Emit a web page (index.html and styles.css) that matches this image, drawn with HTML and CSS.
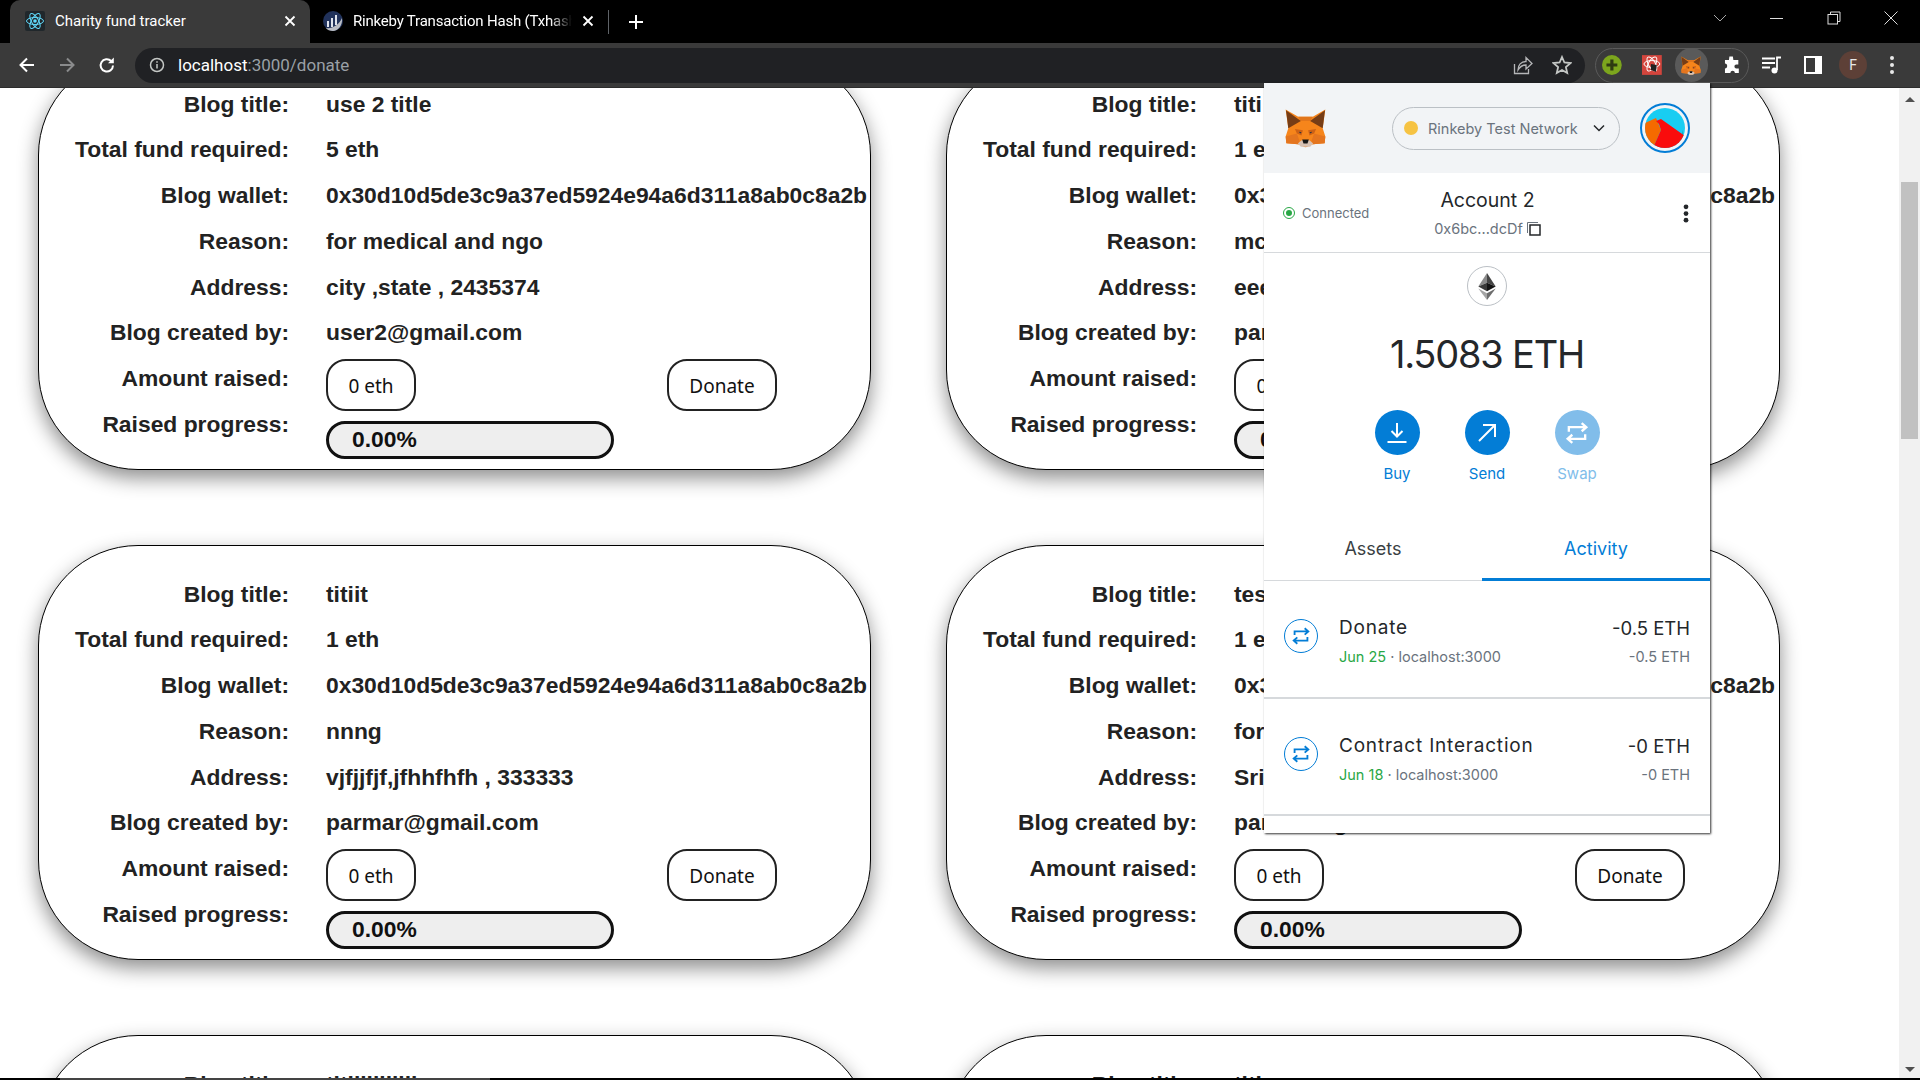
FILE: index.html
```html
<!DOCTYPE html>
<html lang="en">
<head>
    <meta charset="UTF-8">
    <title>Charity fund tracker</title>
    <link rel="stylesheet" href="styles.css">
</head>
<body>
    <svg class="defs" width="0" height="0">
        <symbol id="fox" viewBox="0 0 124 118">
            <polygon fill="#f6851b" points="2,3 40,25 84,25 122,3 114,60 122,85 120,105 85,108 62,118 39,108 4,105 2,85 10,60"/>
            <polygon fill="#e2761b" points="40,25 84,25 76,38 48,38"/>
            <polygon fill="#763d16" points="3,5 48,38 10,60"/>
            <polygon fill="#763d16" points="121,5 76,38 114,60"/>
            <polygon fill="#cd6116" points="30,62 54,66 50,82 36,76"/>
            <polygon fill="#cd6116" points="94,62 70,66 74,82 88,76"/>
            <polygon fill="#233447" points="42,70 50,72 46,76"/>
            <polygon fill="#233447" points="82,70 74,72 78,76"/>
            <polygon fill="#e4751f" points="2,85 36,76 44,98 39,108 4,105"/>
            <polygon fill="#e4751f" points="122,85 88,76 80,98 85,108 120,105"/>
            <polygon fill="#d7c1b3" points="39,106 50,96 74,96 85,106 76,116 48,116"/>
            <polygon fill="#161616" points="52,94 72,94 68,106 56,106"/>
        </symbol>
        <symbol id="swap" viewBox="0 0 24 24">
            <path d="M5 11V7h14M16 3.500 20 7l-4 3.500M19 13v4H5M8 20.500 4 17l4-3.500" fill="none" stroke="currentColor" stroke-width="2"/>
        </symbol>
    </svg>

    <header class="chrome">
        <div class="tabstrip">
            <div class="tab tab-active">
                <svg class="favicon" viewBox="0 0 20 20"><rect width="20" height="20" rx="2" fill="#20272b"/><g fill="none" stroke="#61dafb" stroke-width="1"><ellipse cx="10" cy="10" rx="8.500" ry="3.500"/><ellipse cx="10" cy="10" rx="8.500" ry="3.500" transform="rotate(60 10 10)"/><ellipse cx="10" cy="10" rx="8.500" ry="3.500" transform="rotate(120 10 10)"/></g><circle cx="10" cy="10" r="1.800" fill="#61dafb"/></svg>
                <span class="tab-title">Charity fund tracker</span>
                <svg class="tab-close" viewBox="0 0 12 12"><path d="M1.500 1.500l9 9M10.500 1.500l-9 9" stroke="#fff" stroke-width="1.800"/></svg>
            </div>
            <div class="tab tab-other">
                <svg class="favicon" viewBox="0 0 20 20"><circle cx="10" cy="10" r="10" fill="#21325b"/><path d="M4 10h2v6H4zM8 7h2v9H8zM12 4h2v10h-2z" fill="#dfe4ee"/><path d="M3 17c6 1 13-3 16-10 1 7-4 13-9 13-3 0-6-1-7-3z" fill="#b9bcc4"/></svg>
                <span class="tab-title tab-fade">Rinkeby Transaction Hash (Txhash</span>
                <svg class="tab-close" viewBox="0 0 12 12"><path d="M1.500 1.500l9 9M10.500 1.500l-9 9" stroke="#fff" stroke-width="1.800"/></svg>
            </div>
            <span class="tab-sep"></span>
            <svg class="new-tab" viewBox="0 0 16 16"><path d="M8 1v14M1 8h14" stroke="#fff" stroke-width="2"/></svg>
            <div class="win-controls">
                <svg class="win-chevron" viewBox="0 0 14 8"><path d="M1 1l6 6 6-6" fill="none" stroke="#a8a8a8"/></svg>
                <svg class="win-btn" viewBox="0 0 14 14"><path d="M0 7.500h13" stroke="#ddd"/></svg>
                <svg class="win-btn" viewBox="0 0 14 14"><path d="M3.500 3V1h9.500v9.500h-2.500" fill="none" stroke="#ddd"/><rect x="1" y="3.500" width="9.500" height="9.500" fill="none" stroke="#ddd"/></svg>
                <svg class="win-btn" viewBox="0 0 14 14"><path d="M.5.500l13 13M13.500.500l-13 13" stroke="#ddd"/></svg>
            </div>
        </div>
        <div class="toolbar">
            <svg class="nav-icon" viewBox="0 0 18 18"><path d="M16 9H3M9 2.500 2.500 9 9 15.500" fill="none" stroke="#fff" stroke-width="2"/></svg>
            <svg class="nav-icon" viewBox="0 0 18 18"><path d="M2 9h13M9 2.500 15.500 9 9 15.500" fill="none" stroke="#8a8b8c" stroke-width="2"/></svg>
            <svg class="nav-icon" viewBox="0 0 18 18"><path d="M15 9.500a6.200 6.200 0 1 1-1.800-4.500" fill="none" stroke="#fff" stroke-width="2"/><path d="M15.800 1.500v5.800H10z" fill="#fff"/></svg>
            <div class="omnibox">
                <svg class="info-icon" viewBox="0 0 16 16"><circle cx="8" cy="8" r="6.500" fill="none" stroke="#c4c7c5" stroke-width="1.500"/><path d="M8 7v4.500M8 4.200v1.500" stroke="#c4c7c5" stroke-width="1.500"/></svg>
                <span class="url"><span class="url-host">localhost</span>:3000/donate</span>
                <svg class="omni-icon" viewBox="0 0 20 20"><path d="M1.500 9v9.500h14V14" fill="none" stroke="#b5b6b8" stroke-width="1.300"/><path d="M5 15c0-5 3-8.500 8-8.500V2.500l6 6-6 5.500V10c-4 0-6 1.500-8 5z" fill="none" stroke="#b5b6b8" stroke-width="1.300"/></svg>
                <svg class="omni-icon" viewBox="0 0 20 20"><path d="M10 2l2.400 5.500 6 .6-4.500 4 1.300 5.900L10 15l-5.200 3 1.300-5.900-4.500-4 6-.6z" fill="none" stroke="#c4c7c5" stroke-width="1.800"/></svg>
            </div>
            <div class="ext-group">
                <svg class="ext-icon" viewBox="0 0 20 20"><circle cx="10" cy="10" r="10" fill="#7ca51d"/><path d="M10 4.500v11M4.500 10h11" stroke="#2f3a12" stroke-width="3.200"/></svg>
                <svg class="ext-icon ext-red" viewBox="0 0 20 20"><rect width="20" height="20" fill="#d3453d"/><g fill="none" stroke="#fff"><ellipse cx="10" cy="9" rx="8" ry="3.500"/><ellipse cx="10" cy="9" rx="8" ry="3.500" transform="rotate(60 10 9)"/><ellipse cx="10" cy="9" rx="8" ry="3.500" transform="rotate(120 10 9)"/></g><path d="M9 9l6 1-1 7-5-2z" fill="#222"/></svg>
                <span class="ext-fox"><svg viewBox="0 0 124 118"><use href="#fox"/></svg></span>
                <svg class="ext-icon" viewBox="0 0 20 20"><path d="M7.500 1.500h3.500l.5 3.500h5v4.500h-2c-2.500 0-2.500 4 0 4h2.500V18H13c0-3-4.500-3-4.500 0H3v-4.500c3 0 3-5 0-5V5h4z" fill="#fff"/></svg>
            </div>
            <svg class="tool-icon" viewBox="0 0 20 20"><path d="M0 3.500h13M0 8h13M0 12.500h8" stroke="#fff" stroke-width="1.800"/><path d="M15 15V2.500h4" fill="none" stroke="#fff" stroke-width="1.800"/><circle cx="12.500" cy="15.500" r="3" fill="#fff"/></svg>
            <svg class="tool-icon tool-panel" viewBox="0 0 20 20"><rect x="1" y="1" width="18" height="18" fill="#fff"/><rect x="3" y="3" width="9" height="14" fill="#3a3a3a"/></svg>
            <span class="profile">F</span>
            <svg class="kebab-icon" viewBox="0 0 6 20"><circle cx="3" cy="3" r="2" fill="#e8e8e8"/><circle cx="3" cy="10" r="2" fill="#e8e8e8"/><circle cx="3" cy="17" r="2" fill="#e8e8e8"/></svg>
        </div>
    </header>

    <div class="viewport">
        <main class="page">
            <div class="blog-grid">
                <section class="blog-card">
                    <span class="field">Blog title:</span><span class="value">use 2 title</span>
                    <span class="field">Total fund required:</span><span class="value">5 eth</span>
                    <span class="field">Blog wallet:</span><span class="value">0x30d10d5de3c9a37ed5924e94a6d311a8ab0c8a2b</span>
                    <span class="field">Reason:</span><span class="value">for medical and ngo</span>
                    <span class="field">Address:</span><span class="value">city ,state , 2435374</span>
                    <span class="field">Blog created by:</span><span class="value">user2@gmail.com</span>
                    <span class="field">Amount raised:</span>
                    <div class="raised"><button class="pill-btn pill-amount">0 eth</button><button class="pill-btn pill-donate">Donate</button></div>
                    <span class="field">Raised progress:</span>
                    <div class="progress-bar">0.00%</div>
                </section>
                <section class="blog-card">
                    <span class="field">Blog title:</span><span class="value">titi</span>
                    <span class="field">Total fund required:</span><span class="value">1 eth</span>
                    <span class="field">Blog wallet:</span><span class="value">0x30d10d5de3c9a37ed5924e94a6d311a8ab0c8a2b</span>
                    <span class="field">Reason:</span><span class="value">mc</span>
                    <span class="field">Address:</span><span class="value">eee</span>
                    <span class="field">Blog created by:</span><span class="value">parmar@gmail.com</span>
                    <span class="field">Amount raised:</span>
                    <div class="raised"><button class="pill-btn pill-amount">0 eth</button><button class="pill-btn pill-donate">Donate</button></div>
                    <span class="field">Raised progress:</span>
                    <div class="progress-bar">0.00%</div>
                </section>
                <section class="blog-card">
                    <span class="field">Blog title:</span><span class="value">titiit</span>
                    <span class="field">Total fund required:</span><span class="value">1 eth</span>
                    <span class="field">Blog wallet:</span><span class="value">0x30d10d5de3c9a37ed5924e94a6d311a8ab0c8a2b</span>
                    <span class="field">Reason:</span><span class="value">nnng</span>
                    <span class="field">Address:</span><span class="value">vjfjjfjf,jfhhfhfh , 333333</span>
                    <span class="field">Blog created by:</span><span class="value">parmar@gmail.com</span>
                    <span class="field">Amount raised:</span>
                    <div class="raised"><button class="pill-btn pill-amount">0 eth</button><button class="pill-btn pill-donate">Donate</button></div>
                    <span class="field">Raised progress:</span>
                    <div class="progress-bar">0.00%</div>
                </section>
                <section class="blog-card">
                    <span class="field">Blog title:</span><span class="value">test</span>
                    <span class="field">Total fund required:</span><span class="value">1 eth</span>
                    <span class="field">Blog wallet:</span><span class="value">0x30d10d5de3c9a37ed5924e94a6d311a8ab0c8a2b</span>
                    <span class="field">Reason:</span><span class="value">for</span>
                    <span class="field">Address:</span><span class="value">Sri</span>
                    <span class="field">Blog created by:</span><span class="value">parmar@gmail.com</span>
                    <span class="field">Amount raised:</span>
                    <div class="raised"><button class="pill-btn pill-amount">0 eth</button><button class="pill-btn pill-donate">Donate</button></div>
                    <span class="field">Raised progress:</span>
                    <div class="progress-bar">0.00%</div>
                </section>
                <section class="blog-card">
                    <span class="field">Blog title:</span><span class="value">titiiiiiiiiiii</span>
                </section>
                <section class="blog-card">
                    <span class="field">Blog title:</span><span class="value">title</span>
                </section>
            </div>
        </main>
        <div class="scrollbar">
            <span class="arrow-up"></span>
            <span class="thumb"></span>
            <span class="arrow-down"></span>
        </div>
    </div>
    <div class="taskbar-edge"><span class="edge-segment"></span></div>

    <!-- MetaMask extension popup -->
    <aside class="wallet">
        <div class="wallet-head">
            <svg class="wallet-fox" viewBox="0 0 124 118"><use href="#fox"/></svg>
            <div class="network">
                <span class="network-dot"></span>
                <span class="network-name">Rinkeby Test Network</span>
                <svg class="network-caret" viewBox="0 0 12 8"><path d="M1 1.500l5 5 5-5" fill="none" stroke="#24272a" stroke-width="1.500"/></svg>
            </div>
            <div class="identicon">
                <svg viewBox="0 0 40 40"><circle cx="20" cy="20" r="20" fill="#18cdf2"/><path d="M38 22a20 20 0 0 1-.600 6L37 28z" fill="#0d7f78"/><clipPath id="identicon-clip"><circle cx="20" cy="20" r="20"/></clipPath><g clip-path="url(#identicon-clip)"><polygon points="0,15 11,10 16,22 8,40 0,32" fill="#f56a00"/><polygon points="11,13 16,11 40,28 36,40 8,40 16,22 14,16" fill="#fa0c0c"/></g></svg>
            </div>
        </div>
        <div class="account-row">
            <span class="connected"><span class="connected-dot"></span>Connected</span>
            <div class="account">
                <div class="account-name">Account 2</div>
                <div class="account-addr">0x6bc...dcDf
                    <svg class="copy-icon" viewBox="0 0 14 14"><path d="M.5 11V.5H11" fill="none" stroke="#6a737d"/><rect x="3" y="3" width="10" height="10" fill="none" stroke="#24272a" stroke-width="1.500"/></svg>
                </div>
            </div>
            <svg class="account-menu" viewBox="0 0 6 20"><circle cx="3" cy="3" r="2.500" fill="#24272a"/><circle cx="3" cy="10" r="2.500" fill="#24272a"/><circle cx="3" cy="17" r="2.500" fill="#24272a"/></svg>
        </div>
        <div class="balance-box">
            <div class="eth-badge">
                <svg viewBox="0 0 18 28"><polygon points="9,0 0,14 9,10" fill="#8a8a8a"/><polygon points="9,0 18,14 9,10" fill="#454545"/><polygon points="0,14 9,10 9,19" fill="#3a3a3a"/><polygon points="18,14 9,10 9,19" fill="#141414"/><polygon points="0,16 9,28 9,21" fill="#a5a5a5"/><polygon points="18,16 9,28 9,21" fill="#6d6d6d"/></svg>
            </div>
            <div class="balance">1.5083 ETH</div>
            <div class="actions">
                <div class="action">
                    <span class="action-circle"><svg viewBox="0 0 24 24"><path d="M12 2v13M6.500 10l5.500 5.500 5.500-5.500M2.500 21h19" fill="none" stroke="#fff" stroke-width="2"/></svg></span>
                    Buy
                </div>
                <div class="action">
                    <span class="action-circle"><svg viewBox="0 0 24 24"><path d="M4 20L19 5M8 4h12v12" fill="none" stroke="#fff" stroke-width="2"/></svg></span>
                    Send
                </div>
                <div class="action action-off">
                    <span class="action-circle"><svg class="swap-big" viewBox="0 0 24 24"><use href="#swap"/></svg></span>
                    Swap
                </div>
            </div>
        </div>
        <div class="wallet-tabs">
            <span class="wallet-tab">Assets</span>
            <span class="wallet-tab wallet-tab-on">Activity</span>
        </div>
        <div class="tx">
            <span class="tx-icon"><svg viewBox="0 0 24 24"><use href="#swap"/></svg></span>
            <div class="tx-main">
                <div class="tx-title">Donate</div>
                <div class="tx-sub"><span class="tx-date">Jun 25</span> · localhost:3000</div>
            </div>
            <div class="tx-amount">
                <div class="tx-value">-0.5 ETH</div>
                <div class="tx-sub">-0.5 ETH</div>
            </div>
        </div>
        <div class="tx">
            <span class="tx-icon"><svg viewBox="0 0 24 24"><use href="#swap"/></svg></span>
            <div class="tx-main">
                <div class="tx-title">Contract Interaction</div>
                <div class="tx-sub"><span class="tx-date">Jun 18</span> · localhost:3000</div>
            </div>
            <div class="tx-amount">
                <div class="tx-value">-0 ETH</div>
                <div class="tx-sub">-0 ETH</div>
            </div>
        </div>
    </aside>
</body>
</html>
```

FILE: styles.css
```css
html, body {
    height: 100%;
}
body {
    margin: 0;
    display: flex;
    flex-direction: column;
    overflow: hidden;
    background: #fff;
    font-family: "Liberation Sans", Arial, sans-serif;
}
.defs {
    position: absolute;
}

/* browser chrome */
.chrome {
    position: relative;
    z-index: 2;
    flex: none;
    height: 88px;
    color: #fff;
    font-family: Roboto, sans-serif;
}
.tabstrip {
    height: 43px;
    background: #000;
    display: flex;
    align-items: center;
}
.tab {
    height: 43px;
    display: flex;
    align-items: center;
    box-sizing: border-box;
    padding-bottom: 2px;
}
.tab-active {
    width: 300px;
    margin-left: 10px;
    padding-left: 15px;
    padding-right: 14px;
    background: #3a3a3a;
    border-radius: 10px 10px 0 0;
}
.tab-other {
    width: 295px;
    padding-left: 13px;
    padding-right: 11px;
}
.favicon {
    width: 20px;
    height: 20px;
    flex: none;
}
.tab-title {
    flex: 1;
    margin-left: 10px;
    font-size: 15px;
    white-space: nowrap;
    overflow: hidden;
}
.tab-fade {
    letter-spacing: -0.200px;
    -webkit-mask-image: linear-gradient(to right, #000 90%, transparent);
    mask-image: linear-gradient(to right, #000 90%, transparent);
}
.tab-close {
    width: 12px;
    height: 12px;
    flex: none;
    margin-left: 10px;
}
.tab-sep {
    width: 1px;
    height: 24px;
    background: #5f6368;
    margin-left: 3px;
}
.new-tab {
    width: 16px;
    height: 16px;
    margin-left: 19px;
}
.win-controls {
    margin-left: auto;
    display: flex;
    align-items: center;
    align-self: flex-start;
    height: 36px;
    padding-right: 22px;
    gap: 43px;
}
.win-chevron {
    width: 14px;
    height: 8px;
}
.win-btn {
    width: 14px;
    height: 14px;
}
.toolbar {
    height: 45px;
    background: #3a3a3a;
    display: flex;
    align-items: center;
    box-sizing: border-box;
    border-bottom: 1px solid #2c2c2c;
}
.nav-icon {
    width: 18px;
    height: 18px;
    margin-left: 18px;
    margin-right: 4px;
}
.omnibox {
    width: 1450px;
    height: 35px;
    margin-left: 15px;
    background: #202124;
    border-radius: 18px;
    display: flex;
    align-items: center;
    box-sizing: border-box;
    padding: 0 13px 0 14px;
}
.info-icon {
    width: 16px;
    height: 16px;
}
.url {
    margin-left: 13px;
    font-size: 17px;
    color: #9aa0a6;
    flex: 1;
}
.url-host {
    color: #fff;
}
.omni-icon {
    width: 20px;
    height: 20px;
    margin-left: 19px;
}
.ext-group {
    width: 154px;
    height: 35px;
    margin-left: 10px;
    border: 1px solid #5a5a5a;
    border-radius: 18px;
    box-sizing: border-box;
    display: flex;
    align-items: center;
    gap: 14px;
    padding: 0 6px;
}
.ext-icon {
    width: 20px;
    height: 20px;
}
.ext-red {
    margin-left: 6px;
}
.ext-fox {
    width: 34px;
    height: 34px;
    margin-left: -1px;
    border-radius: 50%;
    background: #5a5a5a;
    display: flex;
    align-items: center;
    justify-content: center;
}
.ext-fox svg {
    width: 20px;
    height: 19px;
}
.tool-icon {
    width: 20px;
    height: 20px;
    margin-left: 13px;
}
.tool-panel {
    margin-left: 21px;
}
.profile {
    width: 28px;
    height: 28px;
    margin-left: 16px;
    border-radius: 50%;
    background: #5d4037;
    color: #e8e8e8;
    font-size: 14px;
    display: flex;
    align-items: center;
    justify-content: center;
}
.kebab-icon {
    width: 6px;
    height: 20px;
    margin-left: 22px;
}

/* scrolled page */
.viewport {
    flex: 1;
    min-height: 0;
    display: flex;
}
.page {
    flex: 1;
    overflow: hidden;
}
.blog-grid {
    display: grid;
    grid-template-columns: 833px 834px;
    gap: 75px;
    margin-top: -33px;
    padding-left: 38px;
}
.blog-card {
    height: 415px;
    box-sizing: border-box;
    padding-top: 25.500px;
    background: #fff;
    border: 1px solid #000;
    border-radius: 100px;
    box-shadow: 0 8px 20px rgba(0, 0, 0, 0.45);
    display: grid;
    grid-template-columns: 250px auto;
    grid-auto-rows: 45.750px;
    column-gap: 37px;
    align-content: start;
    color: #222;
    font-size: 22.850px;
    font-weight: bold;
}
.field {
    text-align: right;
    line-height: 45px;
}
.value {
    line-height: 45px;
    white-space: nowrap;
}
.raised {
    width: 451px;
    display: flex;
    justify-content: space-between;
    align-items: flex-start;
    margin-top: 2.500px;
}
.pill-btn {
    height: 52px;
    padding: 2px 0 0;
    background: #fff;
    border: 2px solid #222;
    border-radius: 20px;
    color: #111;
    font-family: "Noto Sans", sans-serif;
    font-size: 19px;
}
.pill-amount {
    width: 90px;
}
.pill-donate {
    width: 110px;
}
.progress-bar {
    width: 288px;
    height: 38px;
    margin-top: 19.500px;
    box-sizing: border-box;
    padding-left: 23px;
    background: #eee;
    border: 3px solid #111;
    border-radius: 20px;
    line-height: 30px;
    color: #111;
}

/* scrollbar + bottom edge */
.scrollbar {
    flex: none;
    width: 21px;
    position: relative;
    background: #f1f1f1;
}
.thumb {
    position: absolute;
    left: 2px;
    right: 2px;
    top: 94px;
    height: 257px;
    background: #c1c1c1;
}
.arrow-up, .arrow-down {
    position: absolute;
    left: 6px;
    width: 0;
    height: 0;
    border-left: 5px solid transparent;
    border-right: 5px solid transparent;
}
.arrow-up {
    top: 9px;
    border-bottom: 5px solid #505050;
}
.arrow-down {
    bottom: 6px;
    border-top: 5px solid #505050;
}
.taskbar-edge {
    flex: none;
    position: relative;
    z-index: 2;
    height: 2px;
    background: #000;
}
.edge-segment {
    display: block;
    width: 430px;
    height: 2px;
    margin-left: 60px;
    background: #444;
}

/* wallet popup */
.wallet {
    position: absolute;
    z-index: 3;
    left: 1264px;
    top: 83px;
    width: 446px;
    height: 750px;
    background: #fff;
    overflow: hidden;
    box-shadow: 1px 1px 2px rgba(0, 0, 0, 0.8);
    color: #24272a;
    font-family: Inter, sans-serif;
}
.wallet-head {
    height: 90px;
    background: #f2f4f6;
    display: flex;
    align-items: center;
    padding-left: 21px;
    box-sizing: border-box;
}
.wallet-fox {
    width: 41px;
    height: 40px;
    flex: none;
}
.network {
    width: 228px;
    height: 43px;
    margin-left: 66px;
    border: 1px solid #bbc0c5;
    border-radius: 22px;
    box-sizing: border-box;
    display: flex;
    align-items: center;
    padding-left: 11px;
    color: #6a737d;
    font-size: 14.500px;
}
.network-dot {
    width: 14px;
    height: 14px;
    border-radius: 50%;
    background: #f6c343;
    flex: none;
}
.network-name {
    margin-left: 10px;
    white-space: nowrap;
}
.network-caret {
    width: 12px;
    height: 8px;
    margin-left: auto;
    margin-right: 14px;
}
.identicon {
    width: 50px;
    height: 50px;
    margin-left: 20px;
    box-sizing: border-box;
    border: 2px solid #037dd6;
    border-radius: 50%;
    padding: 3px;
}
.identicon svg {
    display: block;
    width: 40px;
    height: 40px;
}
.account-row {
    height: 80px;
    border-bottom: 1px solid #d6d9dc;
    box-sizing: border-box;
    position: relative;
    display: flex;
    align-items: center;
    padding: 1px 19px 0 20px;
}
.connected {
    position: absolute;
    left: 20px;
    top: 32px;
    display: flex;
    align-items: center;
    color: #6a737d;
    font-size: 13px;
}
.connected-dot {
    width: 6px;
    height: 6px;
    border: 2px solid #fff;
    outline: 1px solid #28a745;
    background: #28a745;
    border-radius: 50%;
    margin-right: 8px;
}
.account {
    flex: 1;
    text-align: center;
}
.account-name {
    font-size: 19.500px;
    line-height: 24px;
}
.account-addr {
    margin-top: 7px;
    color: #6a737d;
    font-size: 14.500px;
    line-height: 20px;
    display: flex;
    justify-content: center;
    align-items: center;
    gap: 4px;
}
.copy-icon {
    width: 14px;
    height: 14px;
}
.account-menu {
    position: absolute;
    right: 21px;
    top: 31px;
    width: 6px;
    height: 19px;
}
.balance-box {
    height: 252px;
    display: flex;
    flex-direction: column;
    align-items: center;
    padding-top: 13px;
    box-sizing: border-box;
}
.eth-badge {
    width: 40px;
    height: 40px;
    box-sizing: border-box;
    border: 1px solid #bbc0c5;
    border-radius: 50%;
    display: flex;
    align-items: center;
    justify-content: center;
}
.eth-badge svg {
    width: 18px;
    height: 27px;
}
.balance {
    margin-top: 23px;
    font-size: 38px;
    letter-spacing: -1.200px;
    line-height: 50px;
    white-space: nowrap;
}
.actions {
    display: flex;
    gap: 45px;
    margin-top: 31px;
}
.action {
    width: 45px;
    display: flex;
    flex-direction: column;
    align-items: center;
    color: #037dd6;
    font-size: 15px;
}
.action-off {
    color: #81bdea;
}
.action-circle {
    width: 45px;
    height: 45px;
    margin-bottom: 9px;
    border-radius: 50%;
    background: #037dd6;
    display: flex;
    align-items: center;
    justify-content: center;
}
.action-off .action-circle {
    background: #81bdea;
    color: #fff;
}
.action-circle svg {
    width: 24px;
    height: 24px;
}
.action-circle .swap-big {
    width: 28px;
    height: 28px;
}
.wallet-tabs {
    height: 76px;
    display: grid;
    grid-template-columns: 218px 228px;
    box-sizing: border-box;
    border-bottom: 1px solid #d6d9dc;
}
.wallet-tab {
    font-size: 18px;
    text-align: center;
    color: #3a3f44;
    padding-top: 33px;
}
.wallet-tab-on {
    color: #037dd6;
    border-bottom: 3px solid #037dd6;
    height: 76px;
    box-sizing: border-box;
}
.tx {
    height: 117.500px;
    border-bottom: 2px solid #d6d9dc;
    box-sizing: border-box;
    display: flex;
    align-items: flex-start;
    padding: 35px 20px 0 20px;
}
.tx-icon {
    width: 34px;
    height: 34px;
    margin-top: 3px;
    border: 1px solid #037dd6;
    border-radius: 50%;
    box-sizing: border-box;
    color: #037dd6;
    display: flex;
    align-items: center;
    justify-content: center;
    flex: none;
}
.tx-icon svg {
    width: 22px;
    height: 22px;
}
.tx-main {
    margin-left: 21px;
    flex: 1;
}
.tx-amount {
    text-align: right;
}
.tx-title {
    font-size: 19px;
    letter-spacing: 0.800px;
    line-height: 24px;
}
.tx-value {
    font-size: 18.500px;
    line-height: 24px;
}
.tx-sub {
    margin-top: 8px;
    color: #6a737d;
    font-size: 14.500px;
    line-height: 18px;
}
.tx-date {
    color: #28a745;
}
```
